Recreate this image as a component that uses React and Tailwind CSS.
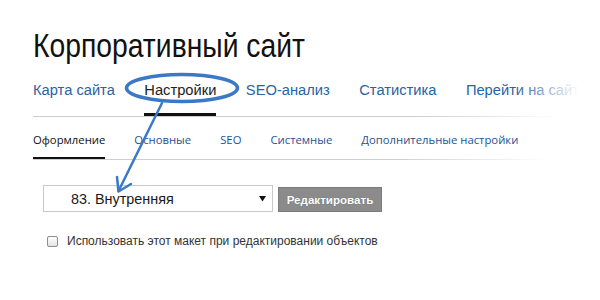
export default function App() {
  const tabs = ["Карта сайта", "Настройки", "SEO-анализ", "Статистика", "Перейти на сайт"];
  const subtabs = ["Оформление", "Основные", "SEO", "Системные", "Дополнительные настройки"];
  return (
    <div className="relative w-[600px] h-[300px] bg-white overflow-hidden pl-[33px] pt-[25px] font-['Liberation_Sans',Arial,sans-serif]">
      <h1 className="text-[28.3px] leading-[34px] h-[37px] text-[#111] whitespace-nowrap origin-top-left scale-y-[1.18]">
        Корпоративный сайт
      </h1>

      <nav className="mt-[18px] flex gap-[29.5px] text-[14.7px] leading-[20px] whitespace-nowrap">
        {tabs.map((t, i) => (
          <span
            key={t}
            className={
              i === 1
                ? "pb-[13px] border-b-[3px] border-[#111] text-[#222]"
                : "pb-[13px] border-b-[3px] border-transparent text-[#2a62a3]"
            }
          >
            {t}
          </span>
        ))}
      </nav>
      <div className="h-px w-[540px] bg-linear-to-r from-[#cdcdcd] from-70% to-transparent" />

      <nav className="mt-[15px] flex gap-[29px] text-[11.3px] leading-[16px] whitespace-nowrap font-['Open_Sans',sans-serif]">
        {subtabs.map((t, i) => (
          <span
            key={t}
            className={
              i === 0
                ? "pb-[9px] border-b-[2px] border-[#111] text-[#111]"
                : "pb-[9px] border-b-[2px] border-transparent text-[#1f5290]"
            }
          >
            {t}
          </span>
        ))}
      </nav>
      <div className="h-px w-[520px] bg-linear-to-r from-[#cfcfcf] from-70% to-transparent" />

      <div className="mt-[25px] ml-[10px] flex items-end gap-[5px]">
        <div className="w-[230px] h-[27px] border border-[#c9c9c9] bg-white flex items-center justify-between pl-[27px] pr-[5px]">
          <span className="text-[14.4px] leading-[20px] text-[#1a1a1a]">83. Внутренняя</span>
          <svg width="8" height="6" viewBox="0 0 8 6">
            <polygon points="0,0 7,0 3.5,5.5" fill="#111" />
          </svg>
        </div>
        <button className="w-[104px] h-[25px] bg-[#8b8b8b] border border-[#7b7b7b] text-white font-bold text-[11.6px] leading-[20px] [text-shadow:0_0_1px_rgba(0,0,0,0.3)]">
          Редактировать
        </button>
      </div>

      <label className="mt-[21px] ml-[14px] flex items-center gap-[9px] h-[16px]">
        <span className="w-[11px] h-[11px] rounded-[2px] border border-[#8e8e8e] bg-linear-to-b from-white to-[#e3e3e3] shrink-0" />
        <span className="text-[12px] leading-[16px] text-[#333] whitespace-nowrap">
          Использовать этот макет при редактировании объектов
        </span>
      </label>

      <div className="absolute left-[515px] top-[70px] w-[85px] h-[100px] bg-linear-to-r from-white/0 to-white to-75% pointer-events-none" />

      <svg className="absolute left-0 top-0 pointer-events-none" width="600" height="300" viewBox="0 0 600 300">
        <ellipse cx="182" cy="88" rx="55.5" ry="13.5" fill="none" stroke="#3b78c6" strokeWidth="3.5" />
        <line x1="162" y1="103" x2="118.5" y2="191" stroke="#3b78c6" strokeWidth="2.5" strokeLinecap="round" />
        <polyline points="117,177 118.5,191.5 131,184" fill="none" stroke="#3b78c6" strokeWidth="2.5" strokeLinecap="round" strokeLinejoin="round" />
      </svg>
    </div>
  );
}
